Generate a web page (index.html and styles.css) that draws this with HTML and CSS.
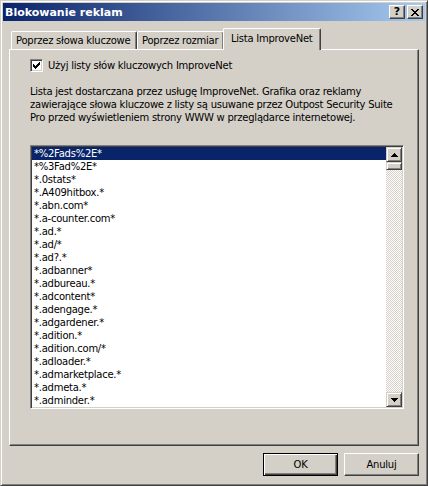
FILE: index.html
```html
<!DOCTYPE html>
<html lang="pl">
<head>
    <meta charset="UTF-8">
    <title>Blokowanie reklam</title>
    <link rel="stylesheet" href="styles.css">
</head>
<body>
    <div class="window">
        <div class="titlebar">
            <span class="title">Blokowanie reklam</span>
            <div class="caption-buttons">
                <span class="caption-btn help">?</span>
                <span class="caption-btn close">
                    <svg width="8" height="7" viewBox="0 0 8 7" shape-rendering="crispEdges">
                        <path d="M0 0h2v1h-2zM6 0h2v1h-2zM1 1h2v1h-2zM5 1h2v1h-2zM2 2h4v1h-4zM3 3h2v1h-2zM2 4h4v1h-4zM1 5h2v1h-2zM5 5h2v1h-2zM0 6h2v1h-2zM6 6h2v1h-2z" fill="#000"/>
                    </svg>
                </span>
            </div>
        </div>

        <div class="client">
            <div class="tabs">
                <div class="tab">Poprzez słowa kluczowe</div>
                <div class="tab">Poprzez rozmiar</div>
                <div class="tab active">Lista ImproveNet</div>
            </div>

            <div class="panel">
                <label class="check">
                    <span class="checkbox">
                        <svg width="7" height="7" viewBox="0 0 7 7" shape-rendering="crispEdges">
                            <path d="M6 0h1v3h-1zM5 1h1v3h-1zM4 2h1v3h-1zM0 2h1v3h-1zM1 3h1v3h-1zM2 4h1v3h-1zM3 3h1v3h-1z" fill="#000"/>
                        </svg>
                    </span>
                    Użyj listy słów kluczowych ImproveNet
                </label>

                <p class="desc">Lista jest dostarczana przez usługę ImproveNet. Grafika oraz reklamy zawierające słowa kluczowe z listy są usuwane przez Outpost Security Suite Pro przed wyświetleniem strony WWW w przeglądarce internetowej.</p>

                <div class="listbox">
                    <ul class="items">
                        <li class="selected">*%2Fads%2E*</li>
                        <li>*%3Fad%2E*</li>
                        <li>*.0stats*</li>
                        <li>*.A409hitbox.*</li>
                        <li>*.abn.com*</li>
                        <li>*.a-counter.com*</li>
                        <li>*.ad.*</li>
                        <li>*.ad/*</li>
                        <li>*.ad?.*</li>
                        <li>*.adbanner*</li>
                        <li>*.adbureau.*</li>
                        <li>*.adcontent*</li>
                        <li>*.adengage.*</li>
                        <li>*.adgardener.*</li>
                        <li>*.adition.*</li>
                        <li>*.adition.com/*</li>
                        <li>*.adloader.*</li>
                        <li>*.admarketplace.*</li>
                        <li>*.admeta.*</li>
                        <li>*.adminder.*</li>
                    </ul>
                    <div class="scrollbar">
                        <span class="sb-btn">
                            <svg width="7" height="4" viewBox="0 0 7 4" shape-rendering="crispEdges"><path d="M3 0h1v1h1v1h1v1h1v1h-7v-1h1v-1h1v-1h1z" fill="#000"/></svg>
                        </span>
                        <span class="sb-thumb"></span>
                        <span class="sb-track"></span>
                        <span class="sb-btn">
                            <svg width="7" height="4" viewBox="0 0 7 4" shape-rendering="crispEdges"><path d="M0 0h7v1h-1v1h-1v1h-1v1h-1v-1h-1v-1h-1v-1h-1z" fill="#000"/></svg>
                        </span>
                    </div>
                </div>
            </div>

            <div class="buttons">
                <button class="btn default">OK</button>
                <button class="btn">Anuluj</button>
            </div>
        </div>
    </div>
</body>
</html>
```

FILE: styles.css
```css
* {
    box-sizing: border-box;
}
body {
    margin: 0;
    background: #d4d0c8;
    font-family: "DejaVu Sans", "Liberation Sans", sans-serif;
    font-size: 10px;
    letter-spacing: -0.25px;
    color: #000;
}

/* outer frame: 3px classic raised border */
.window {
    width: 428px;
    height: 486px;
    background: #d4d0c8;
    border: 1px solid;
    border-color: #d4d0c8 #404040 #404040 #d4d0c8;
    box-shadow: inset 1px 1px #fff, inset -1px -1px #808080;
    padding: 2px;
    display: flex;
    flex-direction: column;
}

.titlebar {
    height: 18px;
    background: linear-gradient(to right, #0a246a, #a6caf0);
    display: flex;
    align-items: center;
    justify-content: space-between;
    padding: 0 2px 0 2px;
}
.title {
    color: #fff;
    font-weight: bold;
    font-size: 11px;
    letter-spacing: 0;
}
.caption-buttons {
    display: flex;
    gap: 2px;
}
.caption-btn {
    width: 16px;
    height: 14px;
    background: #d4d0c8;
    border: 1px solid;
    border-color: #fff #404040 #404040 #fff;
    box-shadow: inset -1px -1px #808080;
    display: flex;
    align-items: center;
    justify-content: center;
}
.caption-btn.help {
    font-weight: bold;
    font-size: 11px;
    line-height: 12px;
    letter-spacing: 0;
}

.client {
    flex: 1;
    padding: 7px 6px 0 6px;
    display: flex;
    flex-direction: column;
}

/* tab strip */
.tabs {
    display: flex;
    align-items: flex-end;
    height: 21px;
    padding-left: 2px;
    position: relative;
    z-index: 1;
}
.tab {
    height: 18px;
    padding: 0 5px 0 4px;
    line-height: 17px;
    border: 1px solid;
    border-bottom: none;
    border-color: #fff #404040 #fff #fff;
    box-shadow: inset -1px 0 #808080;
    border-radius: 2px 2px 0 0;
    white-space: nowrap;
}
.tab:first-child {
    width: 126px;
}
.tab:nth-child(2) {
    width: 87px;
}
.tab.active {
    height: 22px;
    margin-bottom: -1px;
    margin-left: -1px;
    width: 98px;
    padding-left: 7px;
    line-height: 20px;
    background: #d4d0c8;
}

.panel {
    height: 397px;
    border: 1px solid;
    border-color: #fff #404040 #404040 #fff;
    box-shadow: inset -1px -1px #808080;
    padding: 9px 15px 0 20px;
}

.check {
    display: flex;
    align-items: center;
    gap: 5px;
    height: 13px;
    line-height: 13px;
}
.checkbox {
    width: 13px;
    height: 13px;
    background: #fff;
    border: 1px solid;
    border-color: #808080 #fff #fff #808080;
    box-shadow: inset 1px 1px #404040, inset -1px -1px #d4d0c8;
    display: flex;
    align-items: center;
    justify-content: center;
}

.desc {
    margin: 13px 0 21px 0;
    line-height: 13px;
    height: 39px;
    width: 365px;
}

.listbox {
    width: 374px;
    height: 264px;
    background: #fff;
    border: 1px solid;
    border-color: #808080 #fff #fff #808080;
    box-shadow: inset 1px 1px #404040, inset -1px -1px #d4d0c8;
    padding: 1px;
    display: flex;
}
.items {
    list-style: none;
    margin: 0;
    padding: 0;
    flex: 1;
    overflow: hidden;
}
.items li {
    height: 13px;
    line-height: 13px;
    padding-left: 2px;
    white-space: nowrap;
}
.items li.selected {
    background: #0a246a;
    color: #fff;
}

.scrollbar {
    width: 16px;
    display: flex;
    flex-direction: column;
}
.sb-btn,
.sb-thumb {
    background: #d4d0c8;
    border: 1px solid;
    border-color: #d4d0c8 #404040 #404040 #d4d0c8;
    box-shadow: inset 1px 1px #fff, inset -1px -1px #808080;
}
.sb-btn {
    height: 15px;
    display: flex;
    align-items: center;
    justify-content: center;
}
.sb-thumb {
    height: 8px;
}
.sb-track {
    flex: 1;
    background: repeating-conic-gradient(#fff 0 25%, #d4d0c8 0 50%) 0 0 / 2px 2px;
}

.buttons {
    display: flex;
    justify-content: flex-end;
    gap: 6px;
    margin-top: 7px;
}
.btn {
    width: 75px;
    height: 23px;
    margin: 0;
    padding: 0;
    background: #d4d0c8;
    font-family: inherit;
    font-size: 10px;
    letter-spacing: -0.25px;
    color: #000;
    border: 1px solid;
    border-color: #fff #404040 #404040 #fff;
    box-shadow: inset -1px -1px #808080;
}
.btn.default {
    border: 1px solid #000;
    box-shadow: inset 1px 1px #fff, inset -1px -1px #404040, inset -2px -2px #808080;
}
```
